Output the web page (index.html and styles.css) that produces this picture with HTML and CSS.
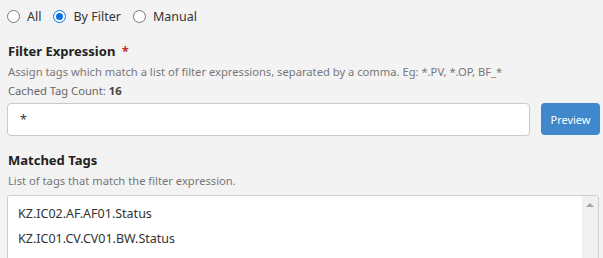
FILE: index.html
```html
<!DOCTYPE html>
<html>
<head>
<meta charset="utf-8">
<link rel="stylesheet" href="styles.css">
</head>
<body>
<div class="page">
  <div class="radios">
    <label class="radio"><span class="dot"></span>All</label>
    <label class="radio"><span class="dot on"></span>By Filter</label>
    <label class="radio"><span class="dot"></span>Manual</label>
  </div>
  <div class="label">Filter Expression <span class="req">*</span></div>
  <div class="help">Assign tags which match a list of filter expressions, separated by a comma. Eg: *.PV, *.OP, BF_*</div>
  <div class="help count">Cached Tag Count: <b>16</b></div>
  <div class="row">
    <div class="input">*</div>
    <button class="btn">Preview</button>
  </div>
  <div class="label second">Matched Tags</div>
  <div class="help">List of tags that match the filter expression.</div>
  <div class="list">
    <div class="items">
      <div class="item">KZ.IC02.AF.AF01.Status</div>
      <div class="item">KZ.IC01.CV.CV01.BW.Status</div>
    </div>
    <div class="scroll"><span class="arrow"></span></div>
  </div>
</div>
</body>
</html>
```
FILE: styles.css
```css
html, body { margin: 0; padding: 0; }
body {
  background: #f3f3f3;
  font-family: "Noto Sans", "Open Sans", sans-serif;
  color: #333;
  width: 603px;
  height: 258px;
  overflow: hidden;
}
.page { padding: 0 3px 0 7px; }
.radios {
  display: flex;
  gap: 12px;
  height: 33px;
  align-items: center;
  font-size: 12.5px;
  color: #333;
}
.radio { display: flex; align-items: center; gap: 7px; }
.dot {
  width: 11px; height: 11px;
  border: 1px solid #777;
  border-radius: 50%;
  background: #fff;
  box-sizing: content-box;
  position: relative;
}
.dot.on { border-color: #0b6fe6; }
.dot.on::after {
  content: ""; position: absolute; left: 2px; top: 2px;
  width: 7px; height: 7px; border-radius: 50%; background: #0b6fe6;
}
.label {
  font-weight: bold;
  font-size: 13px;
  color: #222;
  margin-top: 9px;
  line-height: 18px;
  padding-left: 1px;
}
.label.second { margin-top: 15px; }
.req { color: #b33; font-weight: bold; margin-left: 3px; }
.help {
  font-size: 11.2px;
  color: #777;
  line-height: 18px;
  margin-top: 3px;
  padding-left: 1px;
}
.help.count { margin-top: 1px; color: #666; }
.help.count b { color: #444; }
.row {
  display: flex;
  gap: 11px;
  margin-top: 3px;
  align-items: flex-start;
}
.input {
  flex: 0 0 523px;
  box-sizing: border-box;
  height: 33px;
  border: 1px solid #c9c9c9;
  border-radius: 4px;
  background: #fff;
  font-size: 12.5px;
  line-height: 31px;
  padding-left: 12px;
  color: #333;
}
.btn {
  width: 59px;
  height: 32px;
  border: none;
  border-radius: 4px;
  background: #3f88cc;
  color: #fff;
  font-family: inherit;
  font-size: 11px;
  padding: 0;
}
.list {
  margin-top: 5px;
  width: 592px;
  height: 70px;
  box-sizing: border-box;
  border: 1px solid #cfcfcf;
  border-bottom: none;
  border-radius: 3px 3px 0 0;
  background: #fff;
  display: flex;
}
.items { flex: 1; padding: 5px 10px; }
.item { font-size: 12.5px; line-height: 25px; color: #333; }
.scroll {
  width: 16px;
  background: #f0f0f0;
  display: flex;
  justify-content: center;
  padding-top: 7px;
}
.arrow {
  width: 0; height: 0;
  border-left: 4px solid transparent;
  border-right: 4px solid transparent;
  border-bottom: 4px solid #a3a3a3;
}
```
